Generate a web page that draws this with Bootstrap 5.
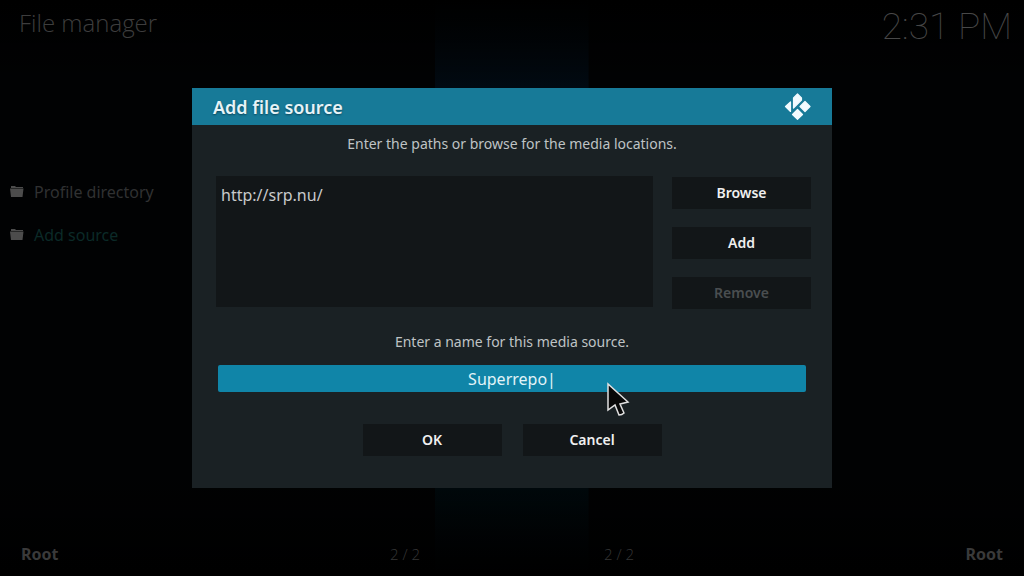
<!DOCTYPE html>
<html lang="en">
<head>
<meta charset="utf-8">
<meta name="viewport" content="width=device-width, initial-scale=1">
<title>File manager</title>
<link href="https://cdn.jsdelivr.net/npm/bootstrap@5.3.0/dist/css/bootstrap.min.css" rel="stylesheet">
<style>
  body {
    font-family: "Noto Sans", "Open Sans", sans-serif;
    font-size: 16px;
    line-height: 24px;
    color: #3a3a3a;
    background: #010203;
  }
  .screen {
    background:
      linear-gradient(#000, transparent 15%, transparent 80%, #000),
      linear-gradient(#010508, #010a12 15%, #01121c 50%, #000a0e 85%, #010508) center / 15% 100% no-repeat;
  }
  .screen-title { font-family: "Open Sans", "Noto Sans", sans-serif; font-size: 24px; font-weight: 300; line-height: 30px; color: #3d3d3d; padding-left: 19px; }
  .clock { font-family: Roboto, sans-serif; font-size: 37px; font-weight: 100; line-height: 38px; color: #484848; }
  .files { padding-top: 124px; }
  .files a { height: 43px; color: #303132; }
  .files a.current { color: #0b2a28; }
  .files svg { color: #4c4c4c; }
  .pane-foot { padding: 0 21px 10px; }
  .total { font-family: "Open Sans", "Noto Sans", sans-serif; font-size: 15px; font-weight: 300; color: #363636; margin: 0 92px; }

  .modal-dialog { max-width: 640px; }
  .modal-content { background: #1a2124; }
  .modal-header { background: #177a98; padding: 0 21px; height: 37px; }
  .modal-title { font-size: 18px; font-weight: 600; line-height: 24px; color: #e6f3f7; text-shadow: 0 1px 2px #0b465a; }
  .modal-body { padding: 9px 21px 32px; }
  .hint { font-size: 14px; line-height: 20px; color: #bfc3c4; }
  .sources { margin: 22px 0 23px 3px; }
  .paths { background: #121618; color: #c8cacb; padding: 7px 5px; margin: 0 19px 2px 0; }
  .paths .list-group-item { color: inherit; line-height: 24px; }
  .side { gap: 18px; padding-top: 1px; }
  .btn-dark-flat {
    --bs-btn-color: #f0f0f0; --bs-btn-bg: #121618; --bs-btn-border-color: #121618;
    --bs-btn-hover-color: #fff; --bs-btn-hover-bg: #1085a8; --bs-btn-hover-border-color: #1085a8;
    --bs-btn-disabled-color: #4a4e50; --bs-btn-disabled-bg: #121618; --bs-btn-disabled-border-color: #121618; --bs-btn-disabled-opacity: 1;
    --bs-btn-font-size: 14px; --bs-btn-font-weight: 600;
    width: 139px; height: 32px; padding: 0; line-height: 20px;
  }
  .name-row { margin: 13px 5px 32px; }
  .name-field, .name-field:focus {
    background: #1085a8; color: #e2f4f8; font-size: 16px; line-height: 24px;
    height: 27px; padding: 0; border-radius: 2px;
  }
  .answers { gap: 21px; }
  .pointer { position: absolute; left: 414px; top: 294px; pointer-events: none; z-index: 2; }
</style>
</head>
<body>
<div class="screen min-vh-100 d-flex flex-column">
  <header class="d-flex justify-content-between align-items-start">
    <h1 class="screen-title mb-0 mt-2">File manager</h1>
    <time class="clock mt-2 me-2 pe-1">2:31 PM</time>
  </header>
  <main class="row g-0 flex-grow-1">
    <nav class="col-6 files" aria-label="Files">
      <a href="#" class="d-flex align-items-center text-decoration-none ps-2">
        <svg class="me-2" width="18" height="14" viewBox="0 0 18 14" fill="currentColor" aria-hidden="true"><path d="M3 1h4l1 1h7v1H3zM2 3.500h13.500l-1 8.500H3z"/></svg>
        Profile directory</a>
      <a href="#" class="current d-flex align-items-center text-decoration-none ps-2">
        <svg class="me-2" width="18" height="14" viewBox="0 0 18 14" fill="currentColor" aria-hidden="true"><path d="M3 1h4l1 1h7v1H3zM2 3.500h13.500l-1 8.500H3z"/></svg>
        Add source</a>
    </nav>
  </main>
  <footer class="row g-0">
    <div class="col-6 pane-foot d-flex justify-content-between pe-0"><strong>Root</strong><span class="total">2 / 2</span></div>
    <div class="col-6 pane-foot d-flex justify-content-between ps-0"><span class="total">2 / 2</span><strong>Root</strong></div>
  </footer>
</div>

<div class="modal d-block" tabindex="-1" role="dialog" aria-labelledby="dialogTitle">
  <div class="modal-dialog modal-dialog-centered">
    <form class="modal-content border-0 rounded-0">
      <div class="modal-header border-0 rounded-0">
        <h2 class="modal-title" id="dialogTitle">Add file source</h2>
        <svg width="27" height="27" viewBox="0 0 27 27" fill="#f2fbff" stroke="#f2fbff" stroke-width="1.200" stroke-linejoin="round" aria-hidden="true">
          <path d="M13.500 1 17.500 5 17.500 7 9.500 15V5zM6.500 9V18.500L1.500 13.500zM21 8.500 26 13.500 21 18.500 16 13.500zM13.500 16.500 18.500 21.500 13.500 26.300 8.500 21.500z"/>
        </svg>
      </div>
      <div class="modal-body">
        <p class="hint text-center mb-0">Enter the paths or browse for the media locations.</p>
        <div class="sources d-flex">
          <div class="paths list-group list-group-flush rounded-0 flex-grow-1">
            <a href="#" class="list-group-item bg-transparent border-0 p-0">http://srp.nu/</a>
          </div>
          <div class="side d-flex flex-column">
            <button type="button" class="btn btn-dark-flat rounded-0">Browse</button>
            <button type="button" class="btn btn-dark-flat rounded-0">Add</button>
            <button type="button" class="btn btn-dark-flat rounded-0" disabled>Remove</button>
          </div>
        </div>
        <label class="hint d-block text-center" for="sourceName">Enter a name for this media source.</label>
        <div class="name-row">
          <input id="sourceName" class="name-field form-control border-0 text-center" type="text" value="Superrepo|">
        </div>
        <div class="answers d-flex justify-content-center">
          <button type="button" class="btn btn-dark-flat rounded-0">OK</button>
          <button type="button" class="btn btn-dark-flat rounded-0">Cancel</button>
        </div>
      </div>
      <svg class="pointer" width="24" height="36" viewBox="0 0 24 36" aria-hidden="true"><path d="M2 2V28L9 23 13 33Q16 33 18 31L14 22 22 20Z" fill="#080808" stroke="#e0e0e0" stroke-width="1.500"/></svg>
    </form>
  </div>
</div>
<script src="https://cdn.jsdelivr.net/npm/bootstrap@5.3.0/dist/js/bootstrap.bundle.min.js"></script>
</body>
</html>
